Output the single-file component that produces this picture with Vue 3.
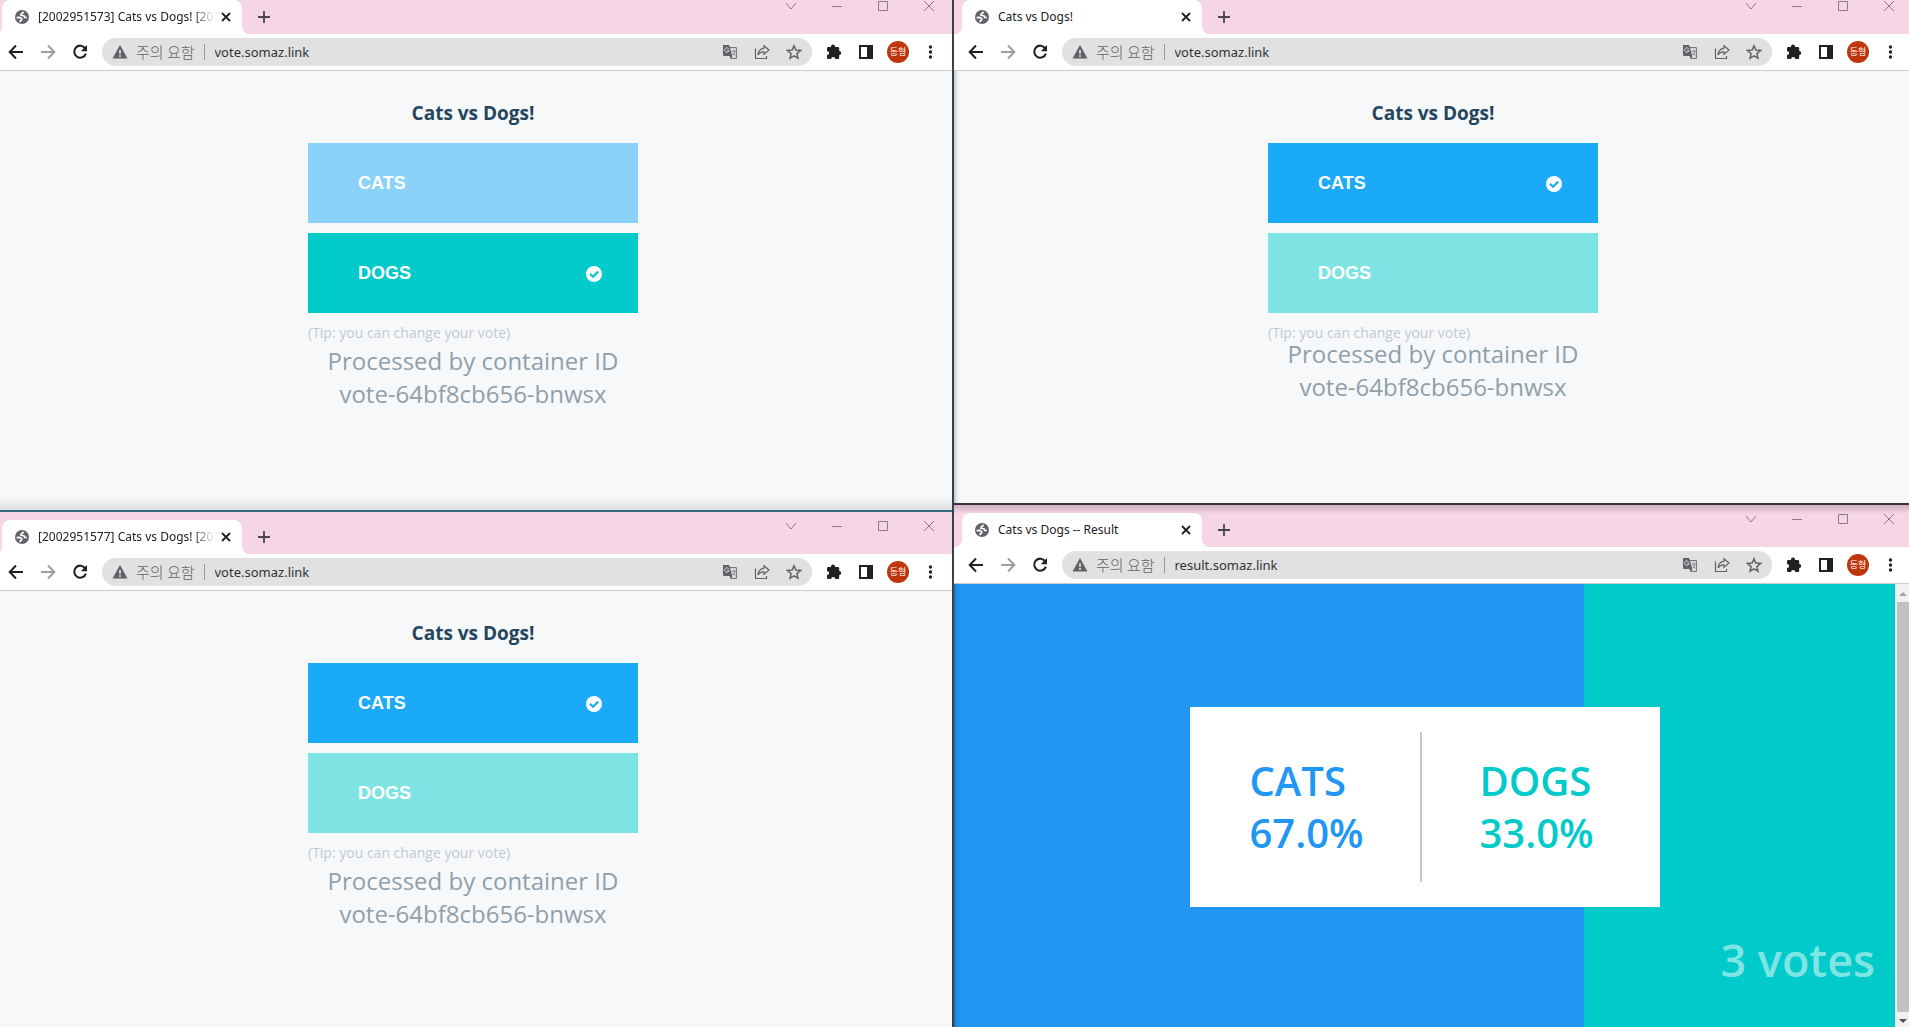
<template>
    <main class="desktop">
        <div v-for="column in columns" :key="column.side" class="column" :class="column.side">
            <section v-for="win in column.windows" :key="win.id" class="window" :class="win.place">
                <header class="tab-strip">
                    <div class="tab">
                        <svg class="favicon" viewBox="0 0 14 14" aria-hidden="true">
                            <circle cx="7" cy="7" r="7" fill="#5f6368" />
                            <path d="M8.2 1.6 7.9 3 6.2 3.9 5.9 5.3 7.4 5.5 9.2 5.9 9.6 7.4 11.9 7.5M1.6 7.6 4.6 7.4 6.7 8.6 6.5 10.3 5.3 10.8 5.3 12.2" fill="none" stroke="#fff" stroke-width="1.6" />
                        </svg>
                        <span class="tab-title" :class="{ faded: win.long }">{{ win.title }}</span>
                        <button class="tab-close" type="button" aria-label="탭 닫기">
                            <svg viewBox="0 0 10 10"><path d="m1 1 8 8M9 1 1 9" stroke="#202124" stroke-width="1.8" /></svg>
                        </button>
                    </div>
                    <button class="new-tab" type="button" aria-label="새 탭">
                        <svg viewBox="0 0 12 12"><path d="M6 0v12M0 6h12" stroke="#4b4549" stroke-width="1.8" /></svg>
                    </button>
                    <div class="window-controls">
                        <button type="button" aria-label="탭 검색"><svg viewBox="0 0 12 12"><path d="m1 3 5 6 5-6" /></svg></button>
                        <button type="button" aria-label="최소화"><svg viewBox="0 0 12 12"><path d="M1 6.5h10" /></svg></button>
                        <button type="button" aria-label="최대화"><svg viewBox="0 0 12 12"><path d="M1.5 1.5h9v9h-9z" /></svg></button>
                        <button type="button" aria-label="닫기"><svg viewBox="0 0 12 12"><path d="m1 1 10 10M11 1 1 11" /></svg></button>
                    </div>
                </header>

                <nav class="toolbar">
                    <button class="tool" type="button" aria-label="뒤로">
                        <svg viewBox="0 0 16 16"><path d="M15 8H2M8 1.5 1.7 8 8 14.5" fill="none" stroke="#202124" stroke-width="2" /></svg>
                    </button>
                    <button class="tool" type="button" aria-label="앞으로">
                        <svg viewBox="0 0 16 16"><path d="M1 8h13M8 1.5 14.3 8 8 14.5" fill="none" stroke="#9c9da0" stroke-width="2" /></svg>
                    </button>
                    <button class="tool" type="button" aria-label="새로고침">
                        <svg viewBox="0 0 16 16">
                            <path d="M13.2 4.3A6 6 0 1 0 13.9 9.6" fill="none" stroke="#202124" stroke-width="2.1" />
                            <path d="M15 1v6.2H8.8z" fill="#202124" />
                        </svg>
                    </button>
                    <div class="omnibox">
                        <svg class="warning" viewBox="0 0 16 14" aria-hidden="true">
                            <path d="M8 0 15.5 13.5H.5z" fill="#5f6368" />
                            <path d="M8 5v4M8 10v2" stroke="#e1e1e1" stroke-width="1.6" />
                        </svg>
                        <span class="security">주의 요함</span>
                        <input class="address" type="text" aria-label="주소" :value="win.url" />
                        <button class="tool" type="button" aria-label="번역">
                            <svg viewBox="0 0 16 16">
                                <path d="M7 3.6h7.4v10.8H8.6" fill="none" stroke="#6b6d70" />
                                <path d="M1 1h6.2l3.2 11H2a1 1 0 0 1-1-1zM7.5 12h3L8.6 15z" fill="#5f6368" />
                                <path d="M6.6 4.7A2.2 2.2 0 1 0 7 6.5H5.2" fill="none" stroke="#dedede" />
                                <path d="M9.8 7h3.8M11.7 5.8V7M13 7c-.4 1.8-1.4 3.2-2.2 4M11 8.5c.7 1.4 1.4 2.2 2.4 2.9" fill="none" stroke="#77797c" stroke-width=".9" />
                            </svg>
                        </button>
                        <button class="tool" type="button" aria-label="공유">
                            <svg viewBox="0 0 16 16">
                                <path d="M1.5 4.5v10h11V12" fill="none" stroke="#5f6368" stroke-width="1.2" />
                                <path d="M10 1.8 15 6l-5 4.2V7.8C7.2 7.6 5.3 8.7 4 11c.4-3.8 2.3-6.3 6-6.8z" fill="none" stroke="#5f6368" stroke-width="1.2" />
                            </svg>
                        </button>
                        <button class="tool" type="button" aria-label="북마크">
                            <svg viewBox="0 0 16 16"><path d="m8 1.8 1.8 4.3 4.7.4-3.6 3.1 1.1 4.6L8 11.8l-4 2.4 1.1-4.6-3.6-3.1 4.7-.4z" fill="none" stroke="#5f6368" stroke-width="1.5" /></svg>
                        </button>
                    </div>
                    <button class="tool" type="button" aria-label="확장 프로그램">
                        <svg viewBox="0 0 16 16"><path d="M5 2.5a2 2 0 0 1 4 0V3h3a1.2 1.2 0 0 1 1.2 1.2V7a2 2 0 0 1 0 4v2.8A1.2 1.2 0 0 1 12 15H9.3a2.1 2.1 0 0 0-4.2 0H2.2A1.2 1.2 0 0 1 1 13.8v-2.7a2.1 2.1 0 0 0 0-4.2V4.2A1.2 1.2 0 0 1 2.2 3H5z" fill="#202124" /></svg>
                    </button>
                    <button class="tool" type="button" aria-label="측면 패널">
                        <svg viewBox="0 0 16 16"><path d="M1 1h14v14H1zM3 3v10h6V3z" fill="#202124" fill-rule="evenodd" /></svg>
                    </button>
                    <button class="tool" type="button" aria-label="프로필"><span class="avatar">동형</span></button>
                    <button class="tool" type="button" aria-label="메뉴">
                        <svg viewBox="0 0 16 16" fill="#202124"><circle cx="8.5" cy="3" r="1.7" /><circle cx="8.5" cy="8" r="1.7" /><circle cx="8.5" cy="13" r="1.7" /></svg>
                    </button>
                </nav>

                <article v-if="win.kind === 'vote'" class="vote-page">
                    <form class="vote-form" @submit.prevent>
                        <h1>Cats vs Dogs!</h1>
                        <button
                            v-for="option in options"
                            :key="option.key"
                            class="choice"
                            :class="[option.key, { unpicked: win.vote !== option.key }]"
                            type="button"
                            @click="win.vote = option.key"
                        >
                            <span>{{ option.label }}</span>
                            <svg v-if="win.vote === option.key" class="check" viewBox="0 0 16 16" aria-hidden="true">
                                <circle cx="8" cy="8" r="8" fill="#fff" />
                                <path d="m4 7.8 3 3 5.2-5.2" fill="none" stroke="currentColor" stroke-width="2.2" />
                            </svg>
                        </button>
                        <p class="tip">(Tip: you can change your vote)</p>
                        <p class="hostname">Processed by container ID vote-64bf8cb656-bnwsx</p>
                    </form>
                </article>

                <article v-else class="result-page">
                    <div class="result-view">
                        <div class="share" :style="{ width: `${results[0].percent}%` }"></div>
                        <div class="result-card">
                            <div v-for="result in results" :key="result.key" class="result" :class="result.key">
                                <div>{{ result.label }}</div>
                                <div>{{ result.percent.toFixed(1) }}%</div>
                            </div>
                        </div>
                        <div class="total">3 votes</div>
                    </div>
                    <div class="scrollbar" aria-hidden="true">
                        <svg viewBox="0 0 8 4"><path d="M0 4 4 0l4 4z" fill="#a3a3a3" /></svg>
                        <span class="thumb"></span>
                        <svg viewBox="0 0 8 4"><path d="m0 0 4 4 4-4z" fill="#505050" /></svg>
                    </div>
                </article>
            </section>
        </div>
    </main>
</template>

<script setup>
import { reactive } from "vue";

const options = [
    { key: "cats", label: "CATS" },
    { key: "dogs", label: "DOGS" },
];

const results = [
    { key: "cats", label: "CATS", percent: 67 },
    { key: "dogs", label: "DOGS", percent: 33 },
];

const columns = reactive([
    {
        side: "left",
        windows: [
            { id: 1, kind: "vote", place: "top", title: "[2002951573] Cats vs Dogs! [200", long: true, url: "vote.somaz.link", vote: "dogs" },
            { id: 2, kind: "vote", place: "bottom", title: "[2002951577] Cats vs Dogs! [200", long: true, url: "vote.somaz.link", vote: "cats" },
        ],
    },
    {
        side: "right",
        windows: [
            { id: 3, kind: "vote", place: "top", title: "Cats vs Dogs!", long: false, url: "vote.somaz.link", vote: "cats" },
            { id: 4, kind: "result", place: "bottom", title: "Cats vs Dogs -- Result", long: false, url: "result.somaz.link", vote: "" },
        ],
    },
]);
</script>

<style>
body {
    background: #f7f8fa;
}
</style>

<style scoped>
.desktop {
    display: grid;
    grid-template-columns: minmax(0, 952fr) minmax(0, 957fr);
    min-height: 100vh;
    overflow: hidden;
    font-family: "Open Sans", "Noto Sans CJK KR", sans-serif;
}

.column {
    display: grid;
    min-width: 0;
}

.column.left {
    grid-template-rows: 510fr 517fr;
    margin-left: -6px;
}

/* the right-hand windows hang slightly over the screen edge */
.column.right {
    grid-template-rows: 503fr 524fr;
    margin-right: -3px;
    border-left: 2px solid #34424f;
}

button {
    padding: 0;
    border: 0;
    background: none;
    font: inherit;
    cursor: pointer;
}

.window {
    display: flex;
    flex-direction: column;
    min-width: 0;
    background: #f7f8fa;
}

.left .top {
    background: linear-gradient(0deg, #dfe1e3, #f7f8fa 14px);
}

.left .bottom {
    border-top: 2px solid #336b80;
}

.right .bottom {
    border-top: 2px solid #3a3037;
}

.right .window {
    box-shadow: inset 5px 0 5px -4px rgba(0, 0, 0, 0.3);
}

.tab-strip {
    display: flex;
    height: 34px;
    padding-left: 8px;
    background: #f6d5e4;
}

.bottom .tab-strip {
    padding-top: 8px;
}

.right .bottom .tab-strip {
    background: linear-gradient(180deg, #d0afbe, #f6d5e4 9px);
}

.tab {
    position: relative;
    display: flex;
    align-items: center;
    width: 240px;
    box-sizing: border-box;
    padding: 0 11px 0 13px;
    border-radius: 8px 8px 0 0;
    background: #fff;
}

.tab::before,
.tab::after {
    content: "";
    position: absolute;
    bottom: 0;
    width: 8px;
    height: 8px;
}

.tab::before {
    right: 100%;
    background: radial-gradient(circle at 0 0, transparent 8px, #fff 8px);
}

.tab::after {
    left: 100%;
    background: radial-gradient(circle at 100% 0, transparent 8px, #fff 8px);
}

.favicon {
    width: 14px;
    height: 14px;
    flex: none;
}

.tab-title {
    flex: 1;
    min-width: 0;
    margin: 0 4px 0 9px;
    font-family: "Noto Sans", "Noto Sans CJK KR", sans-serif;
    font-size: 12px;
    line-height: 16px;
    white-space: nowrap;
    color: #202124;
}

.tab-title.faded {
    mask-image: linear-gradient(270deg, transparent 2px, #000 24px);
}

.tab-close {
    display: flex;
}

.tab-close svg {
    width: 10px;
    height: 10px;
}

.new-tab {
    display: flex;
    align-items: center;
    margin-left: 16px;
}

.new-tab svg {
    width: 12px;
    height: 12px;
}

.window-controls {
    display: flex;
    height: 12px;
    margin-left: auto;
}

.window-controls button {
    display: flex;
    justify-content: center;
    width: 46px;
}

.window-controls svg {
    width: 12px;
    height: 12px;
    fill: none;
    stroke: #8d7983;
    stroke-width: 1;
}

.toolbar {
    display: flex;
    align-items: center;
    height: 36px;
    padding: 0 6px;
    border-bottom: 1px solid #cbcccd;
    background: #fff;
}

.tool {
    display: flex;
    align-items: center;
    justify-content: center;
    width: 32px;
    height: 28px;
    flex: none;
}

.tool svg {
    width: 16px;
    height: 16px;
}

.omnibox {
    display: flex;
    align-items: center;
    flex: 1;
    min-width: 0;
    height: 28px;
    margin: 0 6px;
    padding: 0 2px 0 10px;
    box-sizing: border-box;
    border-radius: 14px;
    background: #e1e1e1;
}

.warning {
    width: 16px;
    height: 14px;
}

.security {
    margin-left: 8px;
    padding-right: 9px;
    border-right: 1px solid #96989a;
    font-family: "Noto Sans CJK KR", sans-serif;
    font-size: 15px;
    font-weight: 300;
    line-height: 16px;
    white-space: nowrap;
    color: #5f6368;
}

.address {
    flex: 1;
    min-width: 0;
    margin-left: 10px;
    padding: 0;
    border: 0;
    outline: 0;
    background: none;
    font-family: "Noto Sans", sans-serif;
    font-size: 13px;
    line-height: 20px;
    color: #303134;
}

.avatar {
    width: 22px;
    height: 22px;
    border-radius: 50%;
    background: #c0360c;
    font-family: "Noto Sans CJK KR", sans-serif;
    font-size: 9px;
    line-height: 22px;
    text-align: center;
    color: #fff;
}

.vote-page {
    display: flex;
    flex: 1;
    justify-content: center;
}

.vote-form {
    display: flex;
    flex-direction: column;
    width: 330px;
    padding-top: 30px;
}

.vote-form h1 {
    margin: 0 0 18px;
    font-size: 19px;
    font-weight: 700;
    line-height: 24px;
    text-align: center;
    color: #25455c;
}

.choice {
    display: flex;
    align-items: center;
    justify-content: space-between;
    height: 80px;
    margin-bottom: 10px;
    padding: 0 36px 0 50px;
    font-family: "Liberation Sans", sans-serif;
    font-size: 18px;
    font-weight: 700;
}

.choice.cats {
    background: #1aaaf8;
    color: #1aaaf8;
}

.choice.dogs {
    background: #00cbca;
    color: #00cbca;
}

.choice.unpicked.cats {
    background: #8ad2f9;
}

.choice.unpicked.dogs {
    background: #7ee4e3;
}

.choice span {
    color: #fff;
}

.check {
    width: 16px;
    height: 16px;
    margin-top: 2px;
}

.tip {
    margin: 0;
    font-size: 14px;
    line-height: 20px;
    color: #c2cad0;
}

.hostname {
    margin: 1px 0 0;
    padding: 0 10px;
    font-size: 24px;
    line-height: 33px;
    text-align: center;
    color: #90a0aa;
}

.right .hostname {
    margin-top: -6px;
}

.result-page {
    display: flex;
    flex: 1;
    padding-right: 3px;
}

.result-view {
    position: relative;
    display: flex;
    flex: 1;
    align-items: center;
    justify-content: center;
    background: #00cbca;
}

.share {
    position: absolute;
    inset: 0 auto 0 0;
    background: #2196f3;
    box-shadow: inset 5px 0 5px -4px rgba(0, 0, 0, 0.3);
}

.result-card {
    position: relative;
    display: flex;
    align-items: center;
    width: 470px;
    height: 200px;
    margin-top: 3px;
    background: #fff;
}

.result {
    display: flex;
    flex-direction: column;
    justify-content: center;
    width: 230px;
    height: 150px;
    box-sizing: border-box;
    padding-left: 60px;
    font-size: 40px;
    font-weight: 600;
    line-height: 52px;
}

.result.cats {
    color: #2196f3;
}

.result.dogs {
    width: 240px;
    padding-left: 58px;
    border-left: 2px solid #c0c9ce;
    color: #00cbca;
}

.total {
    position: absolute;
    right: 20px;
    bottom: 36px;
    font-size: 45px;
    font-weight: 600;
    line-height: 62px;
    color: rgba(255, 255, 255, 0.5);
}

.scrollbar {
    display: flex;
    flex-direction: column;
    align-items: center;
    width: 14px;
    padding: 8px 0 4px 2px;
    box-sizing: border-box;
    background: #f1f1f1;
}

.scrollbar svg {
    width: 8px;
    height: 4px;
}

.thumb {
    flex: 1;
    width: 12px;
    margin: 6px 0 7px;
    background: #c1c1c1;
}
</style>
